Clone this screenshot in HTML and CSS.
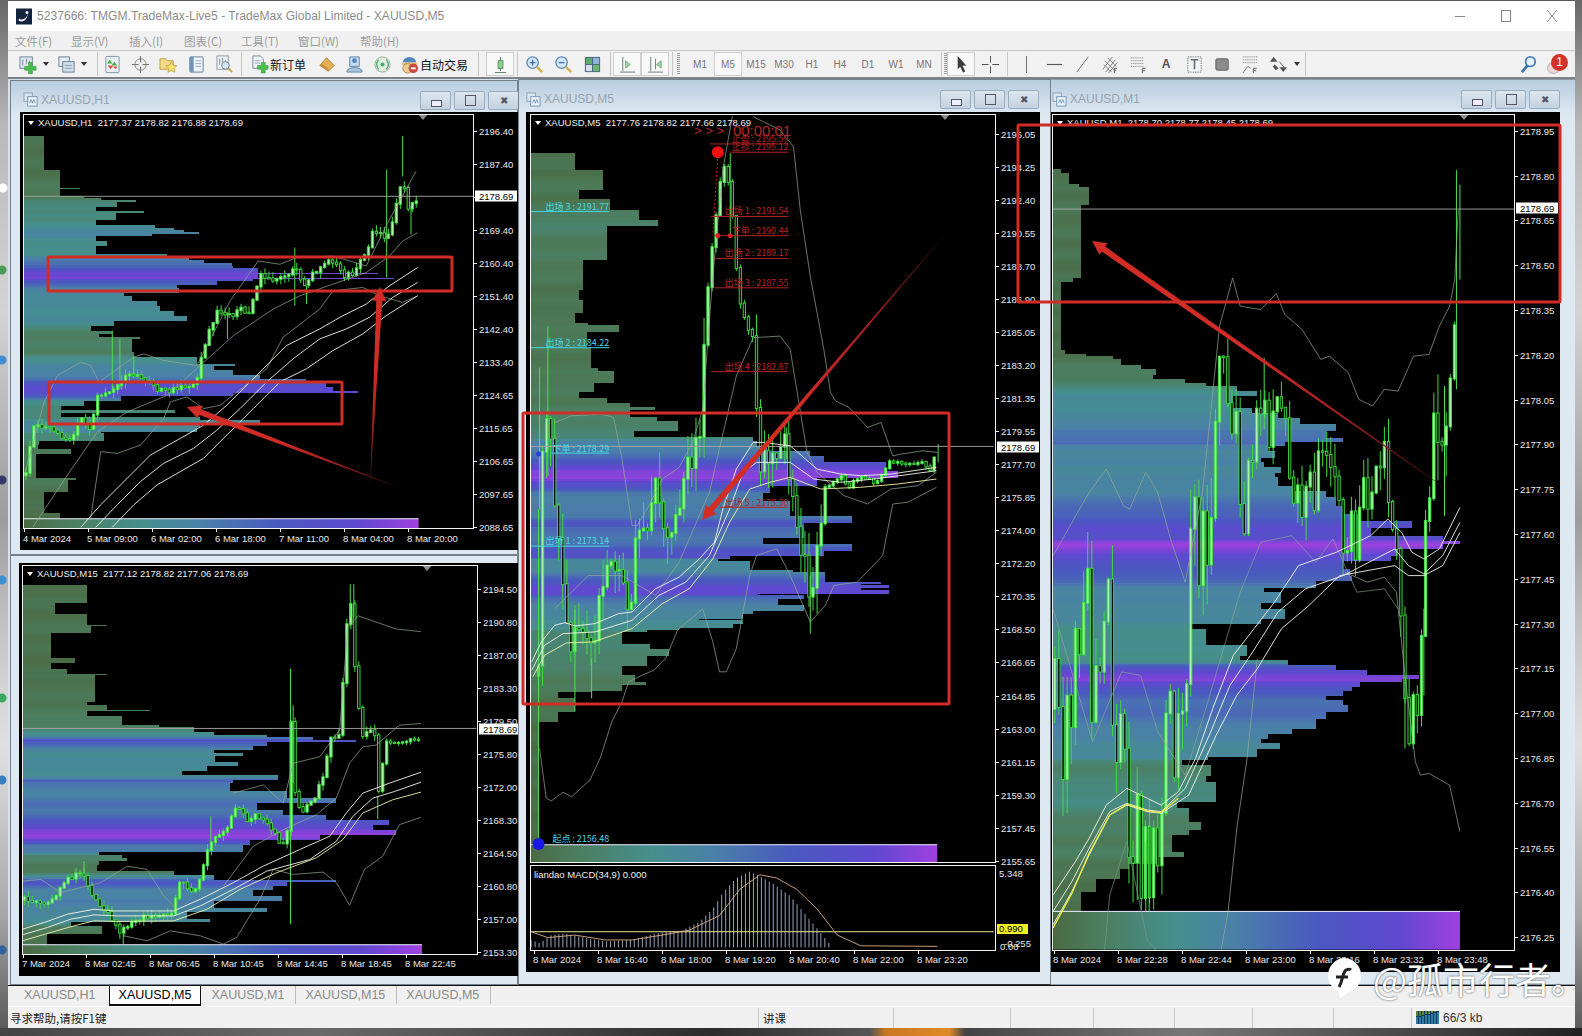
FILE: index.html
```html
<!DOCTYPE html>
<html lang="zh">
<head>
<meta charset="utf-8">
<title>TradeMax</title>
<link rel="stylesheet" href="styles.css">
</head>
<body>
<svg class="sprite" width="0" height="0">
  <symbol id="i-new" viewBox="0 0 20 20"><rect x="1" y="2" width="13" height="12" fill="#dfe8f0" stroke="#5c7590"/><path d="M4 5v6M8 4v5M11 6v4" stroke="#5c7590"/><path d="M10 8h4v4h4v4h-4v4h-4v-4H6v-4h4z" fill="#35b535" stroke="#1f8a1f" stroke-width=".6"/></symbol>
  <symbol id="i-prof" viewBox="0 0 20 20"><rect x="2" y="2" width="11" height="10" fill="#e3ebf3" stroke="#55708c"/><rect x="6" y="7" width="12" height="11" fill="#cfdde9" stroke="#55708c"/><path d="M8 11h8M8 14h8" stroke="#7a96b0"/></symbol>
  <symbol id="i-watch" viewBox="0 0 20 20"><rect x="3" y="1.500" width="14" height="17" rx="1" fill="#e8eef4" stroke="#6d8aa3"/><path d="M7 5l3 4H4zM12 7l3 4H9" fill="#2fa52f"/><path d="M8 11l3 4H5z" fill="#d84030" transform="rotate(180 8 13)"/><path d="M13 12l2.500 3h-5z" fill="#d84030" transform="rotate(180 13 13.500)"/></symbol>
  <symbol id="i-nav" viewBox="0 0 20 20"><circle cx="10" cy="10" r="6" fill="none" stroke="#777"/><path d="M10 1v7M10 12v7M1 10h7M12 10h7" stroke="#666" stroke-width="1.200"/></symbol>
  <symbol id="i-fav" viewBox="0 0 20 20"><path d="M1 4h6l2 2h6v9H1z" fill="#f3d778" stroke="#b6943c"/><path d="M13 7l1.800 3.700 4 .6-2.900 2.800.7 4-3.600-1.900-3.600 1.900.7-4-2.900-2.800 4-.6z" fill="#f6e05a" stroke="#a88a20" stroke-width=".7"/></symbol>
  <symbol id="i-term" viewBox="0 0 20 20"><rect x="3" y="2" width="14" height="16" rx="1" fill="#eef3f8" stroke="#506f8c"/><rect x="3" y="2" width="4" height="16" fill="#5d88b2"/><path d="M9 6h6M9 9h6M9 12h6" stroke="#8aa4bc"/></symbol>
  <symbol id="i-test" viewBox="0 0 20 20"><rect x="2" y="1" width="12" height="14" fill="#eef2f6" stroke="#7d8fa0"/><path d="M5 4v6M8 3v5M11 5v5" stroke="#6a7c8c"/><circle cx="11" cy="11" r="4" fill="#cfe3f4" stroke="#5a7590"/><path d="M14 14l4 4" stroke="#c8a040" stroke-width="2.200"/></symbol>
  <symbol id="i-order" viewBox="0 0 20 20"><path d="M3 1h8l3 3v10H3z" fill="#eef2f6" stroke="#6a7f94"/><path d="M5 6h6M5 8.500h6" stroke="#8da0b2"/><path d="M8 11h4v-3h4v3h3v4h-3v4h-4v-4H8z" fill="#35b535" stroke="#1f8a1f" stroke-width=".6"/></symbol>
  <symbol id="i-meta" viewBox="0 0 20 20"><path d="M10 3l8 8-6 6-9-6z" fill="#e3a83c" stroke="#9c6e1a"/><path d="M3 11l9 6v-3l-7-5z" fill="#c98726"/></symbol>
  <symbol id="i-user" viewBox="0 0 20 20"><path d="M5 2h10v10H5z" fill="#bfd8ee" stroke="#4f79a3"/><circle cx="10" cy="6" r="2.500" fill="#3d78b8"/><path d="M2 17c1-5 15-5 16 0v1H2z" fill="#9fbfdc" stroke="#4f79a3"/></symbol>
  <symbol id="i-sig" viewBox="0 0 20 20"><circle cx="10" cy="10" r="8" fill="#dfeee0" stroke="#8aa58a"/><path d="M6 5a7 7 0 0 0 0 10M14 5a7 7 0 0 1 0 10" fill="none" stroke="#3c9c6c" stroke-width="1.400"/><circle cx="10" cy="10" r="2.200" fill="#2fa06a"/></symbol>
  <symbol id="i-auto" viewBox="0 0 20 20"><path d="M3 8a7 6 0 0 1 14 0z" fill="#3d78b8"/><rect x="2" y="8" width="16" height="2.500" fill="#e9c264"/><circle cx="8" cy="14" r="5" fill="#efc987" stroke="#a9772c"/><circle cx="14" cy="14" r="5" fill="#c9332a"/><rect x="11.500" y="13" width="5" height="2" fill="#fff"/></symbol>
  <symbol id="i-cand" viewBox="0 0 20 20"><rect x="7.500" y="6" width="5" height="8" fill="#7fcf84" stroke="#3d7d45"/><path d="M10 2v4M10 14v3M4 18.500h12" stroke="#3d6d48"/></symbol>
  <symbol id="i-zin" viewBox="0 0 20 20"><circle cx="8" cy="8" r="6" fill="#cfe6f8" stroke="#4b7fb0" stroke-width="1.400"/><path d="M5 8h6M8 5v6" stroke="#1f5f9c" stroke-width="1.400"/><path d="M12.500 12.500l5.500 5.500" stroke="#d2a53c" stroke-width="2.600"/></symbol>
  <symbol id="i-zout" viewBox="0 0 20 20"><circle cx="8" cy="8" r="6" fill="#cfe6f8" stroke="#4b7fb0" stroke-width="1.400"/><path d="M5 8h6" stroke="#1f5f9c" stroke-width="1.400"/><path d="M12.500 12.500l5.500 5.500" stroke="#d2a53c" stroke-width="2.600"/></symbol>
  <symbol id="i-tile" viewBox="0 0 20 20"><rect x="2" y="2" width="16" height="16" fill="#34526e"/><rect x="3" y="3" width="6.500" height="6.500" fill="#4aa358"/><rect x="10.500" y="3" width="6.500" height="6.500" fill="#7fb0d8"/><rect x="3" y="10.500" width="6.500" height="6.500" fill="#d8d8ee"/><rect x="10.500" y="10.500" width="6.500" height="6.500" fill="#59ad62"/></symbol>
  <symbol id="i-shift" viewBox="0 0 20 20"><path d="M5 2v15M2 18h16" stroke="#4d6b58"/><path d="M8 6l5 4-5 4z" fill="#8fd093" stroke="#4d8a55" stroke-width=".7"/></symbol>
  <symbol id="i-scroll" viewBox="0 0 20 20"><path d="M5 2v15M2 18h16M10 4v11" stroke="#5a6b62"/><path d="M16 6l-5 4 5 4z" fill="#8fd093" stroke="#4d8a55" stroke-width=".7"/></symbol>
  <symbol id="i-cur" viewBox="0 0 20 20"><path d="M6 1l9 10-4 .3 3 6-2.400 1.200-3-6.200L6 15z" fill="#222"/></symbol>
  <symbol id="i-cross" viewBox="0 0 20 20"><path d="M10 1v7M10 12v7M1 10h7M12 10h7" stroke="#333"/></symbol>
  <symbol id="i-vl" viewBox="0 0 20 20"><path d="M10 1v18" stroke="#555"/></symbol>
  <symbol id="i-hl" viewBox="0 0 20 20"><path d="M2 10h16" stroke="#444" stroke-width="1.200"/></symbol>
  <symbol id="i-tl" viewBox="0 0 20 20"><path d="M4 18L16 2" stroke="#666"/></symbol>
  <symbol id="i-chan" viewBox="0 0 20 20"><path d="M2 15L12 2M5 18L15 5M8 19L17 8M4 6l10 10M3 10l8 8M7 3l9 9" stroke="#555" stroke-width=".8"/><path d="M14 19v-5h3M14 16h2" stroke="#333" fill="none" stroke-width=".9"/></symbol>
  <symbol id="i-fib" viewBox="0 0 20 20"><path d="M2 3h13M2 6h13M2 9h13M2 12h13" stroke="#666" stroke-dasharray="1 1"/><path d="M14 19v-5h3.500M14 16.500h3" stroke="#444" fill="none"/></symbol>
  <symbol id="i-txtbox" viewBox="0 0 20 20"><rect x="3" y="2" width="14" height="16" fill="#f2f5f8" stroke="#666" stroke-dasharray="1.500 1"/><path d="M6 5h8M10 5v10" stroke="#555" stroke-width="1.600"/></symbol>
  <symbol id="i-rect" viewBox="0 0 20 20"><rect x="3" y="4" width="13" height="12" rx="1.500" fill="#7d7d7d" stroke="#4d4d4d"/></symbol>
  <symbol id="i-fan" viewBox="0 0 20 20"><path d="M2 2h15M2 5h15M2 8h15" stroke="#666" stroke-dasharray="1 1"/><path d="M2 19l5-7 3 2" stroke="#666" fill="none"/><path d="M13 19v-5h3.500M13 16.500h3" stroke="#444" fill="none"/></symbol>
  <symbol id="i-arrows" viewBox="0 0 20 20"><path d="M5 2l4 5H1zM15 18l4-5h-8zM6 10l4 4-3 2-3-4z" fill="#3c3c3c"/><path d="M11 7l5 6" stroke="#3c3c3c"/></symbol>
  <symbol id="i-search" viewBox="0 0 20 20"><circle cx="12" cy="7" r="5" fill="#eaf3fb" stroke="#3577b8" stroke-width="2"/><path d="M9 11l-6 7" stroke="#2d64a0" stroke-width="3"/></symbol>
  <symbol id="i-chartwin" viewBox="0 0 16 16"><rect x="1" y="1" width="9" height="9" fill="#dbe6f0" stroke="#8aa3bb"/><rect x="5" y="5" width="10" height="10" fill="#eef4f9" stroke="#6f95b8"/><path d="M7 12l1.500-4 1.500 4 1.500-4 1.500 4" fill="none" stroke="#5b89b3" stroke-width=".8"/></symbol>
</svg>

<div class="app">
  <header class="titlebar">
    <span class="logo"><svg viewBox="0 0 16 16" width="16" height="17"><rect width="16" height="16" fill="#14243e"/><path d="M3 10c3 2 7 1 9-5-1 5-3 8-7 8-2 0-3-1-2-3z" fill="#eef"/><circle cx="11" cy="4" r="1.500" fill="#eef"/></svg></span>
    <span class="title-text">5237666: TMGM.TradeMax-Live5 - TradeMax Global Limited - XAUUSD,M5</span>
    <span class="sys-btns">
      <span class="sys"><svg width="12" height="12" viewBox="0 0 12 12"><path d="M1 6.500h10" stroke="#888"/></svg></span>
      <span class="sys"><svg width="12" height="14" viewBox="0 0 12 14"><rect x="1.500" y="1.500" width="9" height="11" fill="none" stroke="#888"/></svg></span>
      <span class="sys"><svg width="12" height="14" viewBox="0 0 12 14"><path d="M1 1l10 12M11 1L1 13" stroke="#888"/></svg></span>
    </span>
  </header>

  <nav class="menubar">
    <span class="menu m1">文件(F)</span><span class="menu m2">显示(V)</span><span class="menu m3">插入(I)</span><span class="menu m4">图表(C)</span><span class="menu m5">工具(T)</span><span class="menu m6">窗口(W)</span><span class="menu m7">帮助(H)</span>
  </nav>

  <div class="toolbar">
    <span class="tb"><svg class="ic"><use href="#i-new"/></svg></span><span class="dd"></span>
    <span class="tb ml2"><svg class="ic"><use href="#i-prof"/></svg></span><span class="dd"></span>
    <span class="sep ml9"></span>
    <span class="tb"><svg class="ic"><use href="#i-watch"/></svg></span>
    <span class="tb"><svg class="ic"><use href="#i-nav"/></svg></span>
    <span class="tb"><svg class="ic"><use href="#i-fav"/></svg></span>
    <span class="tb"><svg class="ic"><use href="#i-term"/></svg></span>
    <span class="tb"><svg class="ic"><use href="#i-test"/></svg></span>
    <span class="sep ml3"></span>
    <span class="tb-wide w-order ml8"><svg class="ic"><use href="#i-order"/></svg><span class="tb-label">新订单</span></span>
    <span class="tb"><svg class="ic"><use href="#i-meta"/></svg></span>
    <span class="tb"><svg class="ic"><use href="#i-user"/></svg></span>
    <span class="tb"><svg class="ic"><use href="#i-sig"/></svg></span>
    <span class="tb-wide w-auto ml2"><svg class="ic"><use href="#i-auto"/></svg><span class="tb-label">自动交易</span></span>
    <span class="sep ml4"></span>
    <span class="tb box ml7"><svg class="ic"><use href="#i-cand"/></svg></span>
    <span class="sep ml3"></span>
    <span class="tb ml2"><svg class="ic"><use href="#i-zin"/></svg></span>
    <span class="tb ml1"><svg class="ic"><use href="#i-zout"/></svg></span>
    <span class="tb ml1"><svg class="ic"><use href="#i-tile"/></svg></span>
    <span class="sep ml4"></span>
    <span class="tb box ml2"><svg class="ic"><use href="#i-shift"/></svg></span>
    <span class="tb box"><svg class="ic"><use href="#i-scroll"/></svg></span>
    <span class="sep ml3"></span>
    <span class="grip ml4"></span>
    <span class="tf ml6">M1</span><span class="tf box">M5</span><span class="tf">M15</span><span class="tf">M30</span><span class="tf">H1</span><span class="tf">H4</span><span class="tf">D1</span><span class="tf">W1</span><span class="tf">MN</span>
    <span class="sep ml3"></span>
    <span class="grip ml2"></span>
    <span class="tb box"><svg class="ic"><use href="#i-cur"/></svg></span>
    <span class="tb ml1"><svg class="ic"><use href="#i-cross"/></svg></span>
    <span class="sep ml3"></span>
    <span class="tb ml4"><svg class="ic"><use href="#i-vl"/></svg></span>
    <span class="tb"><svg class="ic"><use href="#i-hl"/></svg></span>
    <span class="tb"><svg class="ic"><use href="#i-tl"/></svg></span>
    <span class="tb"><svg class="ic"><use href="#i-chan"/></svg></span>
    <span class="tb"><svg class="ic"><use href="#i-fib"/></svg></span>
    <span class="tb tb-a">A</span>
    <span class="tb"><svg class="ic"><use href="#i-txtbox"/></svg></span>
    <span class="tb"><svg class="ic"><use href="#i-rect"/></svg></span>
    <span class="tb"><svg class="ic"><use href="#i-fan"/></svg></span>
    <span class="tb"><svg class="ic"><use href="#i-arrows"/></svg></span>
    <span class="dd ml1"></span>
    <span class="sep ml4"></span>
    <span class="tb tb-search"><svg class="ic"><use href="#i-search"/></svg></span>
    <span class="notif"><span class="bubble"></span><span class="badge">1</span></span>
  </div>

  <main class="mdi">
    <section class="win win-h1">
      <div class="win-title"><svg class="win-ic"><use href="#i-chartwin"/></svg><span>XAUUSD,H1</span>
        <span class="ctrls"><span class="ctrl ctrl-min"></span><span class="ctrl ctrl-r"></span><span class="ctrl ctrl-x">✖</span></span></div>
      <div class="pane pane-h1">
        <div class="plot"><svg id="plot-h1" class="plot-svg"></svg><span class="legend">XAUUSD,H1&nbsp; 2177.37 2178.82 2176.88 2178.69</span><span class="mark"></span></div>
        <div class="axis" id="axis-h1"></div>
        <div class="times" id="time-h1"></div>
      </div>
    </section>

    <section class="win win-m15">
      <div class="pane pane-m15">
        <div class="plot"><svg id="plot-m15" class="plot-svg"></svg><span class="legend">XAUUSD,M15&nbsp; 2177.12 2178.82 2177.06 2178.69</span><span class="mark"></span></div>
        <div class="axis" id="axis-m15"></div>
        <div class="times" id="time-m15"></div>
      </div>
    </section>

    <section class="win win-m5">
      <div class="win-title"><svg class="win-ic"><use href="#i-chartwin"/></svg><span>XAUUSD,M5</span>
        <span class="ctrls"><span class="ctrl ctrl-min"></span><span class="ctrl ctrl-r"></span><span class="ctrl ctrl-x">✖</span></span></div>
      <div class="pane pane-m5">
        <div class="plot"><svg id="plot-m5" class="plot-svg"></svg><span class="legend">XAUUSD,M5&nbsp; 2177.76 2178.82 2177.66 2178.69</span><span class="mark"></span></div>
        <div class="axis" id="axis-m5"></div>
        <div class="plot plot-sub"><svg id="plot-macd" class="plot-svg"></svg><span class="legend legend-sub">liandao MACD(34,9) 0.000</span></div>
        <div class="axis" id="axis-macd"></div>
        <div class="times" id="time-m5"></div>
      </div>
    </section>

    <section class="win win-m1">
      <div class="win-title"><svg class="win-ic"><use href="#i-chartwin"/></svg><span>XAUUSD,M1</span>
        <span class="ctrls"><span class="ctrl ctrl-min"></span><span class="ctrl ctrl-r"></span><span class="ctrl ctrl-x">✖</span></span></div>
      <div class="pane pane-m1">
        <div class="plot"><svg id="plot-m1" class="plot-svg"></svg><span class="legend">XAUUSD,M1&nbsp; 2178.70 2178.77 2178.45 2178.69</span><span class="mark"></span></div>
        <div class="axis" id="axis-m1"></div>
        <div class="times" id="time-m1"></div>
      </div>
    </section>
  </main>

  <div class="tabs">
    <span class="tab">XAUUSD,H1</span><span class="tab active">XAUUSD,M5</span><span class="tab">XAUUSD,M1</span><span class="tab">XAUUSD,M15</span><span class="tab">XAUUSD,M5</span>
  </div>

  <footer class="status">
    <span class="cell">寻求帮助,请按F1键</span><span class="cell">讲课</span><span class="cell"></span><span class="cell"></span><span class="cell"></span><span class="cell"></span><span class="cell"></span><span class="cell"></span>
    <span class="cell conn"><svg width="23" height="13" viewBox="0 0 23 13"><rect width="23" height="13" fill="#0c3f5e"/><path d="M1 13V6M4 13V6M7 13V5M10 13V4M13 13V4M16 13V3M19 13V2M22 13V1" stroke="#3d8ec0" stroke-width="1.500"/><path d="M1 5V0M4 5V0M7 4V0M10 3V0M13 3V0M16 2V0M19 1V0" stroke="#7f9a2a" stroke-width="1.500"/></svg>66/3 kb</span>
  </footer>
</div>

<div class="ground"></div>
<svg id="notes" class="notes" viewBox="0 0 1582 1036"></svg>
<div class="watermark">
  <svg width="37" height="42" viewBox="0 0 37 42"><path d="M18.500 1a17.500 17.500 0 0 1 5 34.300L15 41l-1-6.400A17.500 17.500 0 0 1 18.500 1z" fill="#fff"/><path d="M14 30c4-6 3-14 7-17 2-1 4-1 5 0M11 20h12" fill="none" stroke="#222" stroke-width="3"/></svg>
  <span class="wm-text">@孤市行者。</span>
</div>
<script src="script.js"></script>
</body>
</html>
```

FILE: styles.css
```css
* { box-sizing: border-box; }
html, body { margin: 0; height: 1036px; overflow: hidden; }
body {
  position: relative;
  width: 1582px;
  font-family: "Liberation Sans", "Noto Sans CJK SC", sans-serif;
  background:
    radial-gradient(circle at 3px 188px, #fff 0 4px, transparent 5px),
    radial-gradient(circle at 2px 270px, #4c9a58 0 4px, transparent 5px),
    radial-gradient(circle at 2px 360px, #3f8fd0 0 4px, transparent 5px),
    radial-gradient(circle at 2px 480px, #33386e 0 4px, transparent 5px),
    radial-gradient(circle at 2px 580px, #3f8fd0 0 4px, transparent 5px),
    radial-gradient(circle at 2px 698px, #38a85c 0 4px, transparent 5px),
    radial-gradient(circle at 2px 780px, #3a7ec0 0 4px, transparent 5px),
    radial-gradient(circle at 2px 950px, #3360a0 0 4px, transparent 5px),
    linear-gradient(180deg, #666 0, #b8b8b8 12%, #d4d4d4 30%, #9c9c9c 50%, #c8c8c8 62%, #e0e0e0 72%, #a8a8a8 88%, #555 100%);
}
.sprite { position: absolute; }

.app {
  margin-left: 8px;
  width: 1567px;
  height: 1028px;
  display: flex;
  flex-direction: column;
  background: #f0f0f0;
}

.titlebar {
  height: 31px;
  background: #fff;
  display: flex;
  align-items: center;
  border-top: 1px solid #555;
}
.logo { margin-left: 8px; width: 16px; height: 17px; }
.title-text { margin-left: 5px; font-size: 12.1px; color: #8c8c8c; white-space: nowrap; }
.sys-btns { margin-left: auto; display: flex; }
.sys { width: 46px; height: 30px; display: flex; align-items: center; justify-content: center; }

.menubar {
  height: 20px;
  display: flex;
  align-items: center;
  background: #f0f0f0;
  font-family: "Noto Sans CJK SC", sans-serif;
  font-size: 11.5px;
  color: #9c9c9c;
  position: relative;
  border-bottom: 1px solid #c8c8c8;
}
.menu { white-space: nowrap; }
.m1 { margin-left: 7px; width: 56px; }
.m2 { width: 58px; }
.m3 { width: 55px; }
.m4 { width: 57px; }
.m5 { width: 57px; }
.m6 { width: 62px; }

.toolbar {
  height: 28px;
  display: flex;
  align-items: center;
  padding-left: 6px;
  background: #f1f1f1;
  border-bottom: 2px solid #7e8286;
}
.tb, .tf { width: 28px; height: 24px; flex: none; display: flex; align-items: center; justify-content: center; }
.tb.box, .tf.box { border: 1px solid #cfcfcf; background: #f8f8f8; }
.ic { width: 19px; height: 19px; opacity: .88; }
.tb-wide { height: 24px; flex: none; display: flex; align-items: center; }
.w-order { width: 62px; }
.w-auto { width: 76px; padding-left: 2px; }
.tb-label { font-family: "Noto Sans CJK SC", sans-serif; font-size: 12px; color: #111; margin-left: 1px; white-space: nowrap; }
.tf { font-size: 10px; color: #777; }
.tb-a { font-size: 12px; font-weight: bold; color: #555; }
.dd { flex: none; width: 8px; height: 24px; position: relative; }
.dd::after { content: ""; position: absolute; left: 1px; top: 10px; border: 3px solid transparent; border-top: 4px solid #333; border-bottom: 0; }
.sep { flex: none; width: 1px; height: 24px; background: #c6c6c6; }
.grip { flex: none; width: 3px; height: 22px; background-image: linear-gradient(#999 50%, transparent 50%); background-size: 3px 2px; }
.ml1 { margin-left: 1px; }
.ml2 { margin-left: 2px; }
.ml3 { margin-left: 3px; }
.ml4 { margin-left: 4px; }
.ml6 { margin-left: 6px; }
.ml7 { margin-left: 7px; }
.ml8 { margin-left: 8px; }
.ml9 { margin-left: 9px; }
.tb-search { margin-left: auto; }
.notif { width: 32px; height: 24px; position: relative; flex: none; margin-right: 1px; }
.bubble { position: absolute; left: 5px; top: 10px; width: 13px; height: 12px; border-radius: 50%; background: #e8d8d8; border: 1px solid #c4b4b4; }
.badge { position: absolute; left: 9px; top: 2px; width: 17px; height: 17px; border-radius: 50%; background: #d23228; color: #fff; font-size: 12px; line-height: 17px; text-align: center; }

.mdi { flex: 1; position: relative; background: #d6e1eb; overflow: hidden; }

.win {
  position: absolute;
  background: linear-gradient(180deg, #b9cde0 0, #dde8f1 34px, #dde8f1 100%);
  border: 1px solid #75828e;
}
.win-h1 { left: 2px; top: 1px; width: 508px; height: 475px; padding-left: 9px; z-index: 1; }
.win-m15 { left: 2px; top: 476px; width: 508px; height: 430px; padding: 7px 0 0 8px; z-index: 1; background: #dde8f1; }
.win-m5 { left: 510px; top: 0; width: 533px; height: 906px; padding-left: 7px; z-index: 3; border-bottom-color: #333; }
.win-m1 { left: 1040px; top: 0; width: 529px; height: 906px; padding-left: 1px; z-index: 2; border-color: #8b98a5; }
.win-m1 .win-title { padding-left: 2px; }
.win-h1 .win-title { padding-left: 3px; }

.win-title {
  height: 32px;
  padding-top: 6px;
  display: flex;
  align-items: center;
  font-size: 12px;
  color: #97a3af;
  position: relative;
}
.win-h1 .win-title { height: 31px; }
.win-ic { width: 15px; height: 15px; margin-right: 3px; }
.ctrls { position: absolute; right: 0; top: 10px; display: flex; gap: 3px; }
.win-m5 .ctrls { right: 11px; }
.win-m1 .ctrls { right: 16px; }
.win-h1 .ctrls { right: -2px; }
.ctrl {
  width: 31px; height: 19px;
  border: 1px solid #98adc0;
  border-radius: 2px;
  background: linear-gradient(180deg, #dce6ef, #c4d2df);
  color: #556;
  line-height: 17px;
  text-align: center;
  position: relative;
}
.ctrl-x { font-size: 10px; }
.ctrl-r::after { content: ""; position: absolute; left: 10px; top: 3px; width: 9px; height: 9px; border: 1.500px solid #556; }
.ctrl-min::after { content: ""; position: absolute; left: 10px; top: 8px; width: 9px; height: 5px; border: 1px solid #556; background: #eef; }

.pane {
  background: #000;
  display: grid;
  padding-top: 2px;
  align-content: start;
  color: #e8e8e8;
  font-size: 9.5px;
}
.pane-h1 { width: 498px; height: 438px; padding-left: 3px; grid-template-columns: 451px 44px; grid-template-rows: 415px 21px; }
.pane-m15 { width: 499px; height: 413px; padding-left: 3px; grid-template-columns: 456px 40px; grid-template-rows: 390px 21px; }
.pane-m5 { width: 514px; height: 860px; padding-left: 4px; grid-template-columns: 466px 44px; grid-template-rows: 749px 88px 21px; }
.pane-m1 { width: 510px; height: 860px; padding-left: 2px; grid-template-columns: 463px 45px; grid-template-rows: 837px 21px; }

.plot { position: relative; border: 1px solid #f2f2f2; background: #000; overflow: hidden; }
.plot-sub { margin-top: 2px; }
.plot-svg { display: block; width: 100%; height: 100%; }
.mk { font: 9px "Noto Sans CJK SC", "Liberation Sans", sans-serif; }
.timer { font: 13px "Liberation Sans", sans-serif; }
.timer-big { font: 15px "Liberation Sans", sans-serif; }
.legend { position: absolute; left: 14px; top: 2px; font-size: 9.5px; color: #eee; white-space: nowrap; line-height: 12px; }
.legend::before { content: ""; position: absolute; left: -10px; top: 4px; border: 3.500px solid transparent; border-top: 4px solid #fff; border-bottom: 0; }
.legend-sub { left: 3px; top: 3px; }
.legend-sub::before { display: none; }
.mark { position: absolute; right: 45px; top: -1px; border: 5px solid transparent; border-top: 6px solid #8f8f8f; border-bottom: 0; }

.axis { position: relative; }
.times { position: relative; grid-column: 1 / 3; }
.lbl { position: absolute; transform: translateY(-50%); white-space: nowrap; line-height: 11px; }
.tick { position: absolute; background: #eee; }
.tag { position: absolute; transform: translateY(-50%); background: #fff; color: #000; height: 11px; line-height: 11px; padding: 0 1px 0 4px; white-space: nowrap; left: 1px; width: 42px; }
.tag-y { background: #eeee22; left: 1px; width: 31px; padding-left: 2px; height: 10px; line-height: 10px; }

.tabs {
  height: 21px;
  flex: none;
  display: flex;
  align-items: flex-start;
  padding-left: 5px;
  background: #f0f0f0;
  border-top: 1px solid #111;
  font-size: 12.5px;
  color: #8a8a8a;
}
.tab { padding: 0 11px 0 9px; height: 18px; line-height: 18px; border-right: 1px solid #bdbdbd; white-space: nowrap; }
.tab:first-child { border-right: 0; padding: 0 13px 0 11px; }
.tab.active { background: #fff; color: #000; border: 1px solid #111; border-top: 0; border-bottom-width: 2px; padding: 0 9px; height: 20px; margin-right: 1px; }

.status {
  flex: none;
  height: 22px;
  display: grid;
  grid-template-columns: 751px 135px 117px 83px 81px 78px 81px 78px 1fr;
  align-items: center;
  background: #f0f0f0;
  border-top: 1px solid #fafafa;
  font-family: "Noto Sans CJK SC", sans-serif;
  font-size: 11.5px;
  color: #222;
}
.cell { height: 20px; line-height: 20px; border-right: 1px solid #c8c8c8; white-space: nowrap; padding-left: 4px; }
.cell:first-child { padding-left: 2px; }
.conn { border: 0; font-family: "Liberation Sans", sans-serif; font-size: 12px; display: flex; align-items: center; gap: 4px; color: #333; }

.ground {
  position: absolute; left: 0; right: 0; top: 1028px; height: 8px;
  background: linear-gradient(90deg, #444 0, #6a6a6a 20%, #2c2c2c 45%, #555 55%, #c87820 56%, #e08a28 60%, #444 61%, #777 75%, #222 100%);
}

.notes { position: absolute; left: 0; top: 0; width: 1582px; height: 1036px; z-index: 10; pointer-events: none; }

.watermark {
  position: absolute; left: 1325px; top: 951px; z-index: 11;
  display: flex; align-items: center; gap: 11px;
  color: #fff;
  font-family: "Noto Sans CJK SC", sans-serif;
  text-shadow: 0 0 2px #333;
}
.wm-text { font-size: 36px; line-height: 54px; white-space: nowrap; }
```

FILE: script.js
```javascript
/* Charts are drawn from hand-read data. Each series is given in reading coordinates
   (x/sx + x0, y/3 + y0) and mapped to page pixels, which are the viewBox of every plot. */
const STOPS = [[0,[74,106,66]],[.1,[76,124,92]],[.3,[70,143,141]],[.45,[74,128,168]],[.65,[74,88,192]],[.85,[96,72,208]],[1,[160,64,224]]];
function grad(t){
  t=Math.max(0,Math.min(1,t));
  for(let i=1;i<STOPS.length;i++){
    if(t<=STOPS[i][0]){
      const a=STOPS[i-1],b=STOPS[i],k=(t-a[0])/(b[0]-a[0]);
      return 'rgb('+a[1].map((v,j)=>Math.round(v+(b[1][j]-v)*k)).join(',')+')';
    }
  }
  return 'rgb(160,64,224)';
}
function rng(seed){let s=seed;return()=>{s=(s*16807)%2147483647;return s/2147483647;};}
function interp(p,x){
  if(x<=p[0][0])return p[0][1];
  for(let i=1;i<p.length;i++)if(x<=p[i][0]){const k=(x-p[i-1][0])/(p[i][0]-p[i-1][0]);return p[i-1][1]+(p[i][1]-p[i-1][1])*k;}
  return p[p.length-1][1];
}
const fx=(m,x)=>m[0]+x/m[2], fy=(m,y)=>m[1]+y/3;
const f1=n=>n.toFixed(1);

function profile(m,left,startY,rows){
  let out='',y=startY,prevT=rows[0][2];
  const X0=fx(m,left);
  rows.forEach(r=>{
    const y0=y,y1=r[0],right=fx(m,r[1]);
    for(let v=y0;v<y1;v+=6){
      const e=Math.min(v+6,y1),k=(v-y0)/Math.max(1,y1-y0);
      const t=prevT+(r[2]-prevT)*k+.018*Math.sin(v/11);
      out+=`<rect x="${f1(X0)}" y="${f1(fy(m,v))}" width="${f1(right-X0)}" height="${f1((e-v)/3+.4)}" fill="${grad(t)}"/>`;
    }
    y=y1;prevT=r[2];
  });
  return `<g shape-rendering="crispEdges">${out}</g>`;
}
function bar(m,id,l,r,t,b){
  const stops=STOPS.map(s=>`<stop offset="${s[0]}" stop-color="${grad(s[0])}"/>`).join('');
  return `<defs><linearGradient id="${id}">${stops}</linearGradient></defs>
  <rect x="${f1(fx(m,l))}" y="${f1(fy(m,t))}" width="${f1((r-l)/m[2])}" height="${f1((b-t)/3)}" fill="url(#${id})"/>
  <path d="M${f1(fx(m,l))} ${f1(fy(m,t))}H${f1(fx(m,r))}" stroke="#eef" stroke-width="1"/>`;
}
function line(m,p,color,w){
  return `<path d="M${p.map(q=>f1(fx(m,q[0]))+' '+f1(fy(m,q[1]))).join('L')}" fill="none" stroke="${color}" stroke-width="${w}" stroke-linejoin="round"/>`;
}
function candles(m,p,o){
  const r=rng(o.seed);let out='',prev=p[0][1];
  const floor=o.floor||1e9;
  for(let x=p[0][0];x<=p[p.length-1][0];x+=o.step){
    const a=o.amp(x);
    const c=Math.min(floor,interp(p,x)+(r()-.5)*a);
    const top=Math.min(prev,c),bot=Math.max(prev,c)+3;
    const hi=top-r()*a*o.wick,lo=Math.min(floor,bot+r()*a*o.wick);
    const up=c<prev,px=fx(m,x);
    out+=`<path d="M${f1(px)} ${f1(fy(m,hi))}V${f1(fy(m,lo))}" stroke="#3edc3e"/>`;
    out+=`<rect x="${f1(px-1.2)}" y="${f1(fy(m,top))}" width="2.4" height="${f1((bot-top)/3)}" fill="${up?'#a6f7a6':'#061206'}" stroke="#3fe03f" stroke-width=".9"/>`;
    prev=c;
  }
  (o.spikes||[]).forEach(s=>{out+=`<path d="M${f1(fx(m,s[0]))} ${f1(fy(m,s[1]))}V${f1(fy(m,s[2]))}" stroke="#4fe04f"/>`;});
  return out;
}
function priceLine(m,l,r,y){return `<path d="M${f1(fx(m,l))} ${f1(fy(m,y))}H${f1(fx(m,r))}" stroke="#a8a8a8" stroke-width=".9"/>`;}

function setup(id,box,body){
  const s=document.getElementById(id);
  s.setAttribute('viewBox',box.join(' '));
  s.setAttribute('preserveAspectRatio','none');
  s.innerHTML=body;
}
function axis(id,originX,labels,tag){
  const el=document.getElementById(id);let h='';
  labels.forEach(l=>{
    h+=`<span class="lbl" style="left:${l[2]||5}px;top:${l[1]-originX}px">${l[0]}</span>`;
    h+=`<span class="tick" style="left:0;top:${l[1]-originX}px;width:3px;height:1px"></span>`;
  });
  if(tag)h+=`<span class="tag" style="top:${tag-originX}px">2178.69</span>`;
  el.innerHTML=h;
}
function times(id,originX,y,labels){
  const el=document.getElementById(id);let h='';
  labels.forEach(l=>{
    h+=`<span class="tick" style="left:${l[1]+1-originX}px;top:0;width:1px;height:3px"></span>`;
    h+=`<span class="lbl" style="left:${l[1]-originX}px;top:${y}px">${l[0]}</span>`;
  });
  el.innerHTML=h;
}
const prices=(list,start,step)=>list.map((t,i)=>[t,start+i*step]);
const THIN='#93ab93',WHITE='#f6f6ea';

/* ---------- H1 ---------- */
(function(){
  const m=[0,110,3],box=[23,115,451,415];
  const rows=[[182,128,.05],[234,176,.08],[237,238,.08],[258,176,.1],[264,250,.15],[272,300,.2],[275,405,.2],[290,350,.22],[304,285,.2],[310,430,.25],[330,345,.25],[348,285,.3],[355,465,.35],[362,520,.38],[368,550,.4],[371,597,.4],[378,455,.38],[395,285,.3],[410,320,.3],[435,285,.28],[445,500,.45],[452,565,.5],[462,610,.55],[470,695,.6],[476,700,.7],[490,775,.88],[493,1135,.85],[505,775,.88],[508,1185,.8],[515,760,.65],[527,650,.55],[537,530,.45],[550,535,.4],[560,370,.35],[575,395,.35],[590,470,.35],[605,480,.35],[620,520,.35],[635,560,.35],[650,340,.22],[665,270,.15],[675,335,.15],[685,295,.12],[690,420,.14],[730,393,.12],[745,400,.3],[765,590,.35],[770,705,.4],[785,640,.4],[800,700,.45],[810,780,.55],[820,920,.7],[835,980,.8],[848,1000,.8],[851,1075,.75],[862,700,.6],[875,360,.35],[890,250,.25],[905,180,.2],[912,525,.2],[925,180,.2],[935,600,.35],[945,780,.4],[955,600,.38],[970,590,.38],[975,300,.2],[995,310,.2],[1010,115,.1],[1022,110,.1],[1037,212,.1],[1110,105,.06],[1113,225,.08],[1150,200,.05],[1215,128,.04],[1232,176,.04]];
  const path=[[75,1100],[95,950],[110,950],[150,960],[190,990],[215,990],[240,925],[270,960],[290,860],[330,840],[360,825],[385,795],[410,800],[450,825],[490,850],[540,835],[585,825],[600,760],[625,670],[650,605],[680,625],[720,600],[750,610],[780,490],[810,515],[850,500],[890,480],[910,525],[960,470],[1005,450],[1030,500],[1060,490],[1080,460],[1105,410],[1120,370],[1165,385],[1190,290],[1210,195],[1225,300],[1260,265]];
  let b=profile(m,68,78,rows)+bar(m,'g-h1',68,1258,1232,1260);
  b+=candles(m,path,{seed:4711,step:12,amp:()=>16,wick:1.2,spikes:[[1210,78,200],[1162,180,505],[335,665,850],[358,690,840],[885,415,590],[920,530,585],[682,610,690],[1235,290,375],[400,740,800]]});
  b+=line(m,[[70,1100],[130,880],[170,800],[240,760],[270,770],[295,820],[400,745],[430,735],[490,755],[590,770],[690,575],[775,455],[840,465],[890,445],[1000,440],[1100,470],[1165,340],[1250,185]],THIN,.7);
  b+=line(m,[[270,1230],[300,1030],[350,1035],[420,1010],[490,930],[510,880],[560,865],[610,900],[660,890],[800,780],[850,685],[960,600],[1000,545],[1090,535],[1140,560],[1210,580],[1255,560]],THIN,.7);
  b+=line(m,[[95,1258],[200,1100],[290,970],[380,910],[500,860],[600,770],[700,680],[820,600],[900,560],[1000,525],[1100,490],[1170,440],[1210,395],[1255,370]],THIN,.7);
  b+=line(m,[[240,1258],[300,1190],[380,1110],[450,1040],[540,990],[610,950],[680,890],[760,810],[860,710],[960,660],[1030,620],[1100,585],[1170,530],[1255,475]],WHITE,.9);
  b+=line(m,[[285,1258],[350,1190],[420,1120],[490,1065],[580,1020],[650,965],[720,900],[800,820],[880,750],[960,690],[1040,660],[1110,625],[1180,565],[1255,520]],WHITE,.9);
  b+=line(m,[[335,1258],[400,1190],[470,1130],[540,1090],[610,1050],[670,990],[760,900],[840,820],[920,780],[1000,725],[1090,675],[1160,620],[1255,560]],WHITE,.9);
  b+=priceLine(m,68,1423,260);
  setup('plot-h1',box,b);
  axis('axis-h1',115,prices(['2196.40','2187.40','2178.40','2169.40','2160.40','2151.40','2142.40','2133.40','2124.65','2115.65','2106.65','2097.65','2088.65'],131.7,33),196.5);
  times('time-h1',22,9,[['4 Mar 2024',22],['5 Mar 09:00',86],['6 Mar 02:00',150],['6 Mar 18:00',214],['7 Mar 11:00',278],['8 Mar 04:00',342],['8 Mar 20:00',406]]);
})();

/* ---------- M15 ---------- */
(function(){
  const m=[0,550,3],box=[22,565,456,390];
  const rows=[[155,258,.05],[190,162,.05],[222,258,.05],[225,318,.06],[245,270,.06],[322,150,.03],[338,222,.04],[355,150,.04],[370,198,.04],[372,318,.05],[455,282,.07],[465,258,.08],[480,318,.1],[482,450,.1],[498,258,.1],[525,365,.12],[532,475,.15],[545,582,.3],[555,640,.35],[562,800,.5],[570,940,.7],[575,1070,.6],[588,800,.5],[598,760,.4],[610,640,.35],[618,730,.35],[635,645,.35],[648,715,.35],[662,620,.35],[675,545,.35],[690,835,.6],[698,700,.5],[722,690,.4],[745,860,.5],[760,1010,.55],[780,770,.45],[795,850,.55],[810,980,.7],[825,1170,.8],[840,1120,.9],[855,1190,.95],[870,960,.85],[885,750,.5],[905,730,.45],[915,295,.15],[925,365,.15],[935,380,.15],[945,295,.1],[965,290,.1],[978,520,.3],[992,640,.6],[998,1010,.7],[1010,860,.55],[1020,820,.45],[1040,760,.42],[1055,845,.45],[1075,640,.4],[1088,800,.4],[1110,560,.35],[1118,630,.3],[1130,210,.1],[1152,305,.08],[1187,138,.05]];
  const path=[[70,1050],[115,1060],[160,1045],[210,980],[245,975],[280,1050],[330,1100],[355,1150],[380,1130],[420,1105],[520,1090],[535,990],[580,1030],[610,950],[625,880],[680,830],[710,760],[745,810],[770,790],[800,820],[860,900],[875,480],[885,720],[905,790],[945,740],[970,680],[990,570],[1020,560],[1040,230],[1055,160],[1065,330],[1085,550],[1125,540],[1135,740],[1160,570],[1200,580],[1240,565],[1265,575]];
  let b=profile(m,65,102,rows)+bar(m,'g-m15',65,1268,1187,1215);
  b+=candles(m,path,{seed:991,step:12,amp:x=>x>1150?8:16,wick:1.1,spikes:[[872,355,1125],[1052,100,200],[1063,100,200],[880,465,700],[632,800,880],[1135,740,808],[250,935,980],[368,1150,1185]]});
  b+=line(m,[[65,995],[120,990],[180,1030],[300,1000],[380,950],[440,960],[490,1040],[530,1080]],THIN,.7);
  b+=line(m,[[700,730],[790,705],[850,760],[880,640],[960,620],[1020,540],[1045,230],[1075,195],[1190,235],[1265,243]],THIN,.7);
  b+=line(m,[[670,1010],[760,890],[850,840],[950,795],[1010,745],[1050,640],[1090,590],[1130,585],[1200,525],[1265,520]],THIN,.7);
  b+=line(m,[[370,1160],[440,1175],[510,1145],[600,1160],[670,1185],[710,1165],[780,1050],[820,960],[880,975],[970,968],[1010,1000],[1050,1068],[1095,960],[1150,920],[1200,825],[1265,803]],THIN,.7);
  b+=line(m,[[65,1140],[130,1120],[200,1095],[280,1080],[340,1085],[420,1085],[520,1085],[600,1050],[700,1000],[790,950],[900,900],[990,860],[1040,790],[1090,730],[1170,700],[1265,667]],WHITE,.9);
  b+=line(m,[[65,1157],[140,1135],[210,1110],[280,1097],[350,1100],[520,1100],[600,1070],[700,1020],[800,965],[930,930],[1010,875],[1060,800],[1120,745],[1185,725],[1265,697]],WHITE,.9);
  b+=line(m,[[65,1175],[150,1150],[220,1130],[280,1115],[350,1117],[520,1115],[620,1080],[720,1020],[830,970],[950,925],[1030,870],[1090,790],[1180,750],[1265,727]],'#f2f2b0',.9);
  b+=priceLine(m,65,1432,535);
  setup('plot-m15',box,b);
  axis('axis-m15',565,prices(['2194.50','2190.80','2187.00','2183.30','2179.50','2175.80','2172.00','2168.30','2164.50','2160.80','2157.00','2153.30'],589.3,33),728.5);
  times('time-m15',22,8,[['7 Mar 2024',22],['8 Mar 02:45',85],['8 Mar 06:45',149],['8 Mar 10:45',213],['8 Mar 14:45',277],['8 Mar 18:45',341],['8 Mar 22:45',405]]);
})();

/* ---------- M5 ---------- */
(function(){
  const m=[520,110,2.96],box=[530,115,466,749];
  const rows=[[180,160,.05],[240,243,.08],[268,172,.06],[300,265,.08],[308,350,.12],[332,350,.15],[348,408,.18],[378,255,.1],[450,255,.1],[540,183,.06],[570,172,.06],[580,183,.06],[610,183,.08],[640,160,.06],[648,200,.08],[665,290,.1],[715,195,.08],[775,207,.06],[785,230,.08],[820,277,.1],[848,218,.08],[865,172,.08],[880,255,.1],[893,325,.12],[900,397,.14],[925,325,.14],[937,405,.15],[952,467,.17],[965,467,.2],[985,335,.2],[995,690,.42],[1010,700,.45],[1025,730,.5],[1040,860,.55],[1060,900,.7],[1085,1085,.95],[1105,1120,.95],[1130,880,.7],[1150,740,.5],[1175,720,.45],[1200,800,.45],[1222,800,.5],[1242,985,.72],[1255,840,.55],[1285,840,.5],[1305,720,.55],[1325,985,.72],[1340,900,.7],[1350,620,.4],[1356,585,.4],[1385,680,.38],[1390,810,.45],[1420,905,.7],[1425,1070,.75],[1430,1010,.8],[1435,1095,.85],[1445,1010,.85],[1455,1095,.85],[1460,705,.6],[1470,840,.5],[1490,765,.42],[1505,840,.42],[1515,690,.4],[1530,660,.36],[1535,530,.32],[1545,660,.32],[1558,630,.3],[1563,470,.25],[1570,375,.2],[1605,300,.18],[1620,385,.18],[1640,440,.18],[1670,375,.15],[1698,300,.12],[1720,340,.1],[1730,372,.1],[1745,300,.08],[1750,210,.08],[1770,110,.06],[1810,160,.05],[1840,110,.05],[1855,55,.03],[2208,55,.02]];
  const path=[[52,1700],[60,1100],[80,920],[95,1100],[110,1300],[145,1650],[170,1520],[215,1620],[240,1430],[270,1350],[295,1420],[325,1500],[345,1260],[370,1310],[405,1090],[430,1290],[470,1230],[495,1050],[530,1010],[550,600],[575,350],[600,150],[622,240],[632,380],[645,530],[660,620],[695,700],[705,1050],[735,1060],[785,1010],[815,1170],[835,1330],[860,1470],[880,1340],[900,1140],[950,1100],[975,1130],[1010,1100],[1055,1120],[1095,1060],[1195,1060],[1215,1085],[1238,1020]];
  let b=profile(m,30,128,rows)+bar(m,'g-m5',30,1237,2210,2262);
  b+=candles(m,path,{seed:20240,step:12,amp:x=>x>900?10:(x>550&&x<700?18:90),wick:.9,floor:1840,spikes:[[80,650,1100],[55,775,1200],[52,1200,2200],[860,1400,1575],[622,130,380],[790,955,1050],[1240,1005,1060],[160,1500,1810],[210,1650,1770]]});
  b+=line(m,[[690,20],[770,60],[810,110],[830,300],[860,500],[900,720],[920,850],[935,875],[975,895],[1030,955],[1070,940],[1105,1040],[1130,1035],[1195,1025],[1238,1030]],THIN,.7);
  b+=line(m,[[100,940],[150,920],[240,915],[275,925],[300,1050],[330,1250],[345,1250],[380,1190],[420,1110],[470,1075],[510,1000],[540,900],[570,500],[600,180],[628,18]],THIN,.7);
  b+=line(m,[[100,1500],[200,1400],[300,1400],[400,1460],[470,1360],[560,1150],[640,800],[690,685],[770,680],[800,720],[850,1030],[880,1090],[960,1160],[1030,1185],[1100,1140],[1180,1130],[1235,1090]],THIN,.7);
  b+=line(m,[[55,1920],[75,2070],[90,2078],[125,2052],[150,2066],[205,2015],[235,1950],[270,1840],[300,1780],[320,1720],[360,1700],[395,1685],[430,1650],[465,1565],[540,1500],[570,1600],[590,1690],[610,1690],[640,1620],[680,1400],[700,1340],[760,1320],[800,1400],[860,1540],[905,1490],[930,1430],[1000,1420],[1075,1340],[1105,1185],[1150,1180],[1235,1135]],THIN,.7);
  b+=line(m,[[32,1660],[60,1600],[100,1550],[130,1542],[160,1552],[220,1545],[290,1515],[330,1510],[400,1440],[470,1405],[530,1350],[575,1300],[600,1200],[640,1080],[690,1000],[720,1000],[800,1010],[880,1080],[950,1095],[1010,1100],[1100,1095],[1235,1075]],WHITE,.9);
  b+=line(m,[[32,1685],[70,1610],[125,1575],[220,1570],[330,1535],[410,1460],[490,1420],[560,1340],[620,1200],[660,1090],[700,1060],[800,1060],[870,1110],[950,1120],[1050,1110],[1235,1085]],WHITE,.9);
  b+=line(m,[[35,1705],[70,1640],[135,1603],[215,1600],[330,1560],[420,1485],[500,1440],[570,1350],[620,1240],[680,1140],[740,1120],[800,1105],[890,1140],[1010,1135],[1120,1125],[1235,1110]],'#f6f6a8',.9);
  b+=priceLine(m,30,1405,1012);
  const red='#b82424',cy='#46d8e4';
  [['止盈 : 2195.59',562,102,85],['止损 : 2195.12',620,127,110],['出场 1 : 2191.54',565,320,302],['下单 : 2190.44',575,378,362],['出场 2 : 2189.17',575,447,430],['出场 3 : 2187.55',575,535,518],['出场 4 : 2182.87',565,787,770],['出场 5 : 2175.30',590,1195,1180]].forEach(r=>{
    b+=`<path d="M${f1(fx(m,r[1]))} ${f1(fy(m,r[2]))}H${f1(fx(m,795))}" stroke="${red}"/>`;
    b+=`<text x="${f1(fx(m,795))}" y="${f1(fy(m,r[3])+3.5)}" text-anchor="end" class="mk" fill="${red}">${r[0]}</text>`;
  });
  [['出场 3 : 2191.77',30,305,290],['出场 2 : 2184.22',30,715,698],['下单 : 2178.29',90,1032,1017],['出场 1 : 2173.14',30,1312,1296]].forEach(r=>{
    b+=`<path d="M${f1(fx(m,r[1]))} ${f1(fy(m,r[2]))}H${f1(fx(m,262))}" stroke="${cy}"/>`;
    b+=`<text x="${f1(fx(m,262))}" y="${f1(fy(m,r[3])+3.5)}" text-anchor="end" class="mk" fill="${cy}">${r[0]}</text>`;
  });
  b+=`<text x="${f1(fx(m,262))}" y="${f1(fy(m,2192)+3.5)}" text-anchor="end" class="mk" fill="${cy}">起点 : 2156.48</text>`;
  b+=`<circle cx="${f1(fx(m,52))}" cy="${f1(fy(m,2208))}" r="6" fill="#1818e8"/>`;
  b+=`<circle cx="${f1(fx(m,52))}" cy="${f1(fy(m,1035))}" r="2.5" fill="#2040d8"/>`;
  b+=`<circle cx="${f1(fx(m,585))}" cy="${f1(fy(m,127))}" r="6" fill="#f01010"/>`;
  b+=`<circle cx="${f1(fx(m,585))}" cy="${f1(fy(m,378))}" r="2.5" fill="#e02020"/><circle cx="${f1(fx(m,622))}" cy="${f1(fy(m,378))}" r="2.5" fill="#e02020"/>`;
  b+=`<path d="M${f1(fx(m,585))} ${f1(fy(m,135))}L${f1(fx(m,570))} ${f1(fy(m,378))}" stroke="#d02020" stroke-dasharray="2 2"/>`;
  b+=`<text x="${f1(fx(m,515))}" y="${f1(fy(m,75))}" class="timer" fill="#b02828">&gt; &gt; &gt;</text><text x="${f1(fx(m,630))}" y="${f1(fy(m,78))}" class="timer-big" fill="#b02828">00:00:01</text>`;
  setup('plot-m5',box,b);
  const labels=prices(['2196.05','2194.25','2192.40','2190.55','2188.70','2186.90','2185.05','2183.20','2181.35','2179.55','2177.70','2175.85','2174.00','2172.20','2170.35','2168.50','2166.65','2164.85','2163.00','2161.15','2159.30','2157.45','2155.65'],135,33.03);
  axis('axis-m5',115,labels,447.5);

  /* MACD */
  const mm=[520,550,2.96],box2=[530,866,466,86];
  let h='';
  const hist=[[30,1175],[55,1185],[90,1160],[130,1155],[200,1170],[250,1180],[330,1175],[400,1155],[480,1145],[530,1120],[570,1080],[600,1030],[640,985],[680,965],[720,985],[760,1010],[800,1040],[840,1090],[880,1140],[920,1190]];
  for(let x=30;x<=920;x+=11.8)h+=`<path d="M${f1(fx(mm,x))} ${f1(fy(mm,interp(hist,x)))}V${f1(fy(mm,1198))}" stroke="#a8b4d0" stroke-width=".9"/>`;
  h+=`<path d="M${f1(fx(mm,30))} ${f1(fy(mm,1150))}H${f1(fx(mm,1405))}" stroke="#ecec9c"/>`;
  h+=line(mm,[[30,1150],[80,1168],[160,1160],[250,1175],[330,1175],[420,1160],[500,1145],[590,1100],[650,1020],[710,975],[760,985],[820,1020],[880,1080],[940,1160],[1010,1193],[1237,1195]],'#dcae88',.9);
  setup('plot-macd',box2,h);
  document.getElementById('axis-macd').innerHTML=
    '<span class="lbl" style="left:3px;top:10px">5.348</span><span class="lbl" style="left:4px;top:83px">0.00</span><span class="lbl" style="left:8px;top:80px">-0.255</span><span class="tag tag-y" style="top:66px">0.990</span>';
  times('time-m5',526,8,[['8 Mar 2024',529],['8 Mar 16:40',593],['8 Mar 18:00',657],['8 Mar 19:20',721],['8 Mar 20:40',785],['8 Mar 22:00',849],['8 Mar 23:20',913]]);
})();

/* ---------- M1 ---------- */
(function(){
  const m=[1040,110,2.9],box=[1052,115,463,837];
  const rows=[[188,58,.05],[222,82,.05],[232,110,.05],[285,140,.06],[505,115,.05],[515,92,.05],[722,58,.04],[733,70,.05],[740,130,.06],[750,210,.08],[768,232,.1],[780,290,.1],[795,335,.12],[808,325,.14],[820,420,.18],[830,480,.22],[845,570,.3],[860,630,.35],[895,560,.35],[910,615,.35],[925,690,.38],[945,755,.42],[965,860,.5],[985,830,.5],[998,880,.55],[1008,710,.45],[1025,660,.4],[1045,680,.4],[1060,640,.4],[1075,650,.38],[1090,700,.4],[1105,680,.4],[1130,690,.4],[1145,740,.42],[1165,830,.5],[1190,860,.55],[1215,880,.6],[1235,930,.7],[1255,1080,.8],[1280,960,.75],[1295,1170,.95],[1305,1220,1],[1320,1170,.9],[1340,1040,.8],[1355,1020,.75],[1380,880,.65],[1400,900,.6],[1415,905,.55],[1435,800,.45],[1450,650,.4],[1480,700,.4],[1500,640,.4],[1530,710,.38],[1545,640,.32],[1560,430,.3],[1590,480,.3],[1610,480,.3],[1640,600,.3],[1655,580,.28],[1670,720,.6],[1685,860,.8],[1700,950,.9],[1710,1100,.95],[1720,1050,.85],[1735,930,.7],[1745,905,.65],[1760,880,.6],[1775,830,.55],[1790,880,.55],[1810,895,.55],[1830,830,.5],[1860,800,.45],[1875,730,.42],[1890,660,.4],[1905,640,.38],[1920,695,.38],[1945,630,.36],[1955,485,.2],[1970,410,.15],[2000,495,.2],[2020,480,.2],[2040,510,.25],[2080,510,.25],[2100,395,.2],[2140,430,.12],[2165,465,.12],[2180,430,.12],[2200,380,.1],[2230,380,.12],[2245,415,.1],[2265,340,.08],[2280,255,.06],[2310,230,.05],[2350,160,.04],[2410,115,.04]];
  const path=[[40,1800],[70,1900],[100,1650],[130,1340],[150,1750],[190,1350],[210,1780],[240,1950],[255,2150],[290,2250],[315,2320],[340,2150],[375,1880],[405,1780],[430,1500],[445,1100],[465,1400],[490,1250],[510,860],[530,800],[550,850],[570,1000],[585,1300],[610,1080],[640,850],[665,930],[700,960],[720,1060],[745,1100],[760,1250],[790,1150],[815,980],[850,1000],[870,1230],[910,1300],[935,1120],[970,1100],[995,980],[1015,1200],[1040,1350],[1060,1800],[1075,1860],[1105,1680],[1115,1340],[1135,1090],[1150,960],[1170,1100],[1190,860],[1205,640],[1215,300]];
  let b=profile(m,35,178,rows)+bar(m,'g-m1',35,1220,2410,2525);
  b+=candles(m,path,{seed:7331,step:12,amp:x=>x>1190?50:(x>500&&x<1130?200:340),wick:.35,floor:2405,spikes:[[1210,180,840],[1220,225,510],[1175,830,1220],[1060,1700,1920],[1115,1500,1760],[305,2200,2410],[315,2150,2410],[650,745,960]]});
  b+=line(m,[[35,1340],[140,1150],[190,1080],[240,1190],[258,1200],[305,1090],[340,1150],[380,1300],[420,1420],[470,1150],[520,650],[558,505],[580,590],[640,600],[685,552],[710,615],[760,660],[815,750],[840,740],[895,790],[925,870],[965,890],[1000,840],[1040,845],[1085,740],[1130,735],[1160,650],[1190,590],[1205,510],[1215,300]],THIN,.7);
  b+=line(m,[[35,1500],[150,1900],[235,1690],[290,1700],[340,1870],[420,2000],[480,1800],[580,1450],[640,1300],[730,1280],[800,1360],[850,1290],[920,1450],[1000,1440],[1040,1500]],THIN,.6);
  b+=line(m,[[525,2525],[545,2410],[570,2160],[600,1950],[630,1650]],THIN,.7);
  b+=line(m,[[885,1390],[950,1420],[1000,1405],[1035,1450],[1060,1700],[1090,1960],[1105,2000],[1130,1995],[1190,2030],[1220,2170]],THIN,.7);
  b+=line(m,[[185,2525],[200,2360],[250,2200],[310,2500],[335,2525]],'#6f9a7f',.7);
  b+=line(m,[[35,2360],[100,2260],[140,2190],[190,2090],[250,2040],[310,2070],[350,2090],[400,2050],[450,1950],[500,1800],[560,1640],[620,1560],[680,1480],[750,1370],[860,1330],[960,1280],[1010,1230],[1050,1270],[1080,1330],[1115,1350],[1160,1320],[1220,1195]],WHITE,.9);
  b+=line(m,[[35,2410],[90,2320],[140,2220],[200,2110],[250,2085],[310,2105],[350,2110],[420,2040],[490,1880],[550,1730],[610,1640],[690,1510],[770,1440],[880,1400],[1030,1320],[1070,1370],[1115,1395],[1170,1340],[1220,1240]],WHITE,.9);
  b+=line(m,[[35,2450],[90,2350],[140,2240],[200,2120],[250,2090],[310,2110],[350,2115],[430,2060],[510,1880],[570,1760],[630,1680],[700,1560],[780,1490],[870,1400],[1030,1370],[1070,1400],[1115,1400],[1170,1370],[1220,1270]],WHITE,.9);
  b+=line(m,[[35,2460],[90,2355],[140,2235],[200,2120],[250,2088],[310,2108],[350,2112],[400,2070]],'#eef044',1.3);
  b+=priceLine(m,35,1378,298);
  setup('plot-m1',box,b);
  axis('axis-m1',115,prices(['2178.95','2178.80','2178.65','2178.50','2178.35','2178.20','2178.05','2177.90','2177.75','2177.60','2177.45','2177.30','2177.15','2177.00','2176.85','2176.70','2176.55','2176.40','2176.25'],131.7,44.8),209);
  times('time-m1',1050,8,[['8 Mar 2024',1051],['8 Mar 22:28',1115],['8 Mar 22:44',1179],['8 Mar 23:00',1243],['8 Mar 23:16',1307],['8 Mar 23:32',1371],['8 Mar 23:48',1435]]);
})();

/* ---------- hand-drawn red annotations ---------- */
(function(){
  const red='#d22c26';
  let n=`<g fill="none" stroke="${red}" stroke-width="3" stroke-linejoin="round">
    <rect x="48" y="257" width="404" height="34" rx="1"/>
    <rect x="49" y="382" width="293" height="42" rx="1"/>
    <rect x="523" y="413" width="426" height="291" rx="1"/>
    <rect x="1018" y="125" width="542" height="177" rx="1"/>
  </g>`;
  function arrow(i,tx,ty,hx,hy){
    const dx=hx-tx,dy=hy-ty,L=Math.hypot(dx,dy),ux=dx/L,uy=dy/L,px=-uy,py=ux;
    const bx=hx-ux*14,by=hy-uy*14;
    const P=[[tx,ty],[bx+px*3,by+py*3],[bx+px*7,by+py*7],[hx,hy],[bx-px*7,by-py*7],[bx-px*3,by-py*3]];
    return `<defs><linearGradient id="ar${i}" gradientUnits="userSpaceOnUse" x1="${tx}" y1="${ty}" x2="${hx}" y2="${hy}"><stop offset="0" stop-color="#4a0d0d"/><stop offset=".35" stop-color="#a82020"/><stop offset=".6" stop-color="${red}"/></linearGradient></defs>
    <polygon points="${P.map(q=>q[0].toFixed(1)+','+q[1].toFixed(1)).join(' ')}" fill="url(#ar${i})"/>`;
  }
  n+=arrow(1,370,487,380,287)+arrow(2,400,488,187,407)+arrow(3,947,232,702,520)+arrow(4,1462,500,1092,241);
  document.getElementById('notes').innerHTML=n;
})();
```
